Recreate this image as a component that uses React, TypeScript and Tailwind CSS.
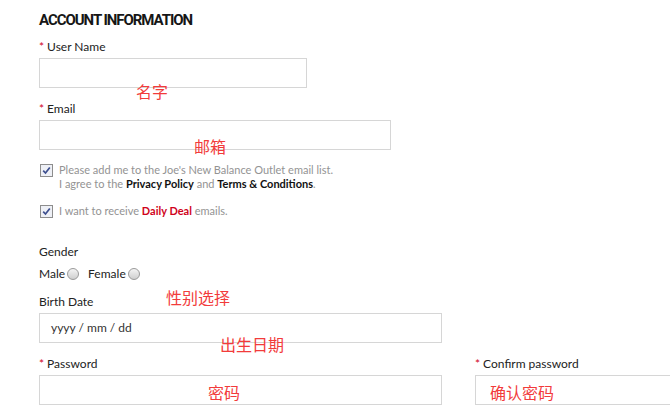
const labelFont = "font-['Lato','Noto_Sans',sans-serif]";

function Req() {
  return <span className="mr-[3px] text-[#d0021b]">*</span>;
}

function Field({ label, required, className, placeholder }: { label: string; required?: boolean; className: string; placeholder?: string }) {
  return (
    <div className="flex flex-col">
      <label className="text-[12px] leading-4 text-[#222]">
        {required && <Req />}
        {label}
      </label>
      <div className={`mt-[3px] flex h-[30px] items-center border border-[#d6d6d6] bg-white px-[11px] text-[12px] text-[#333] ${className}`}>
        {placeholder}
      </div>
    </div>
  );
}

function Check() {
  return (
    <span className="mt-[1px] flex h-[13px] w-[13px] shrink-0 items-center justify-center border border-[#8d8d8d] bg-[#eef0f6]">
      <svg width="9" height="9" viewBox="0 0 9 9">
        <path d="M1.2 4.6 L3.5 7 L7.8 1.4" fill="none" stroke="#3d4f8f" strokeWidth="1.7" />
      </svg>
    </span>
  );
}

function Radio() {
  return (
    <span className="ml-[2px] inline-block h-[12px] w-[12px] rounded-full border border-[#9a9a9a] bg-gradient-to-b from-[#f4f4f4] to-[#cfcfcf] align-[-2px]" />
  );
}

const note = "absolute text-[16px] leading-5 text-[#f23b3b] font-['Noto_Sans_CJK_SC',sans-serif]";

export default function App() {
  return (
    <div className={`relative h-[409px] w-[670px] overflow-hidden bg-white pl-[39px] pt-[10px] ${labelFont}`}>
      <h2 className="text-[15px] font-bold leading-5 tracking-[-0.07em] text-[#161616] font-['Roboto',sans-serif]">
        ACCOUNT INFORMATION
      </h2>

      <div className="mt-[9px]">
        <Field label="User Name" required className="w-[268px]" />
      </div>
      <div className="mt-[13px]">
        <Field label="Email" required className="w-[352px]" />
      </div>

      <div className="mt-[13px] flex gap-[6px] pl-[1px] text-[11px] leading-[14px] text-[#939393]">
        <Check />
        <p>
          Please add me to the Joe's New Balance Outlet email list.
          <br />I agree to the <b className="text-[#111]">Privacy Policy</b> and{" "}
          <b className="text-[#111]">Terms &amp; Conditions</b>.
        </p>
      </div>
      <div className="mt-[13px] flex gap-[6px] pl-[1px] text-[11px] leading-[14px] text-[#939393]">
        <Check />
        <p>
          I want to receive <b className="text-[#d0021b]">Daily Deal</b> emails.
        </p>
      </div>

      <p className="mt-[26px] text-[12px] leading-4 text-[#222]">Gender</p>
      <div className="mt-[6px] flex items-center text-[12px] leading-4 text-[#222]">
        <span>Male</span>
        <Radio />
        <span className="ml-[9px]">Female</span>
        <Radio />
      </div>

      <div className="mt-[12px]">
        <Field label="Birth Date" className="w-[403px]" placeholder="yyyy / mm / dd" />
      </div>

      <div className="mt-[13px] flex gap-[33px]">
        <Field label="Password" required className="w-[403px]" />
        <Field label="Confirm password" required className="w-[403px]" />
      </div>

      <span className={`${note} left-[136px] top-[81px]`}>名字</span>
      <span className={`${note} left-[194px] top-[136px]`}>邮箱</span>
      <span className={`${note} left-[166px] top-[287px]`}>性别选择</span>
      <span className={`${note} left-[220px] top-[334px]`}>出生日期</span>
      <span className={`${note} left-[208px] top-[382px]`}>密码</span>
      <span className={`${note} left-[490px] top-[382px]`}>确认密码</span>
    </div>
  );
}
